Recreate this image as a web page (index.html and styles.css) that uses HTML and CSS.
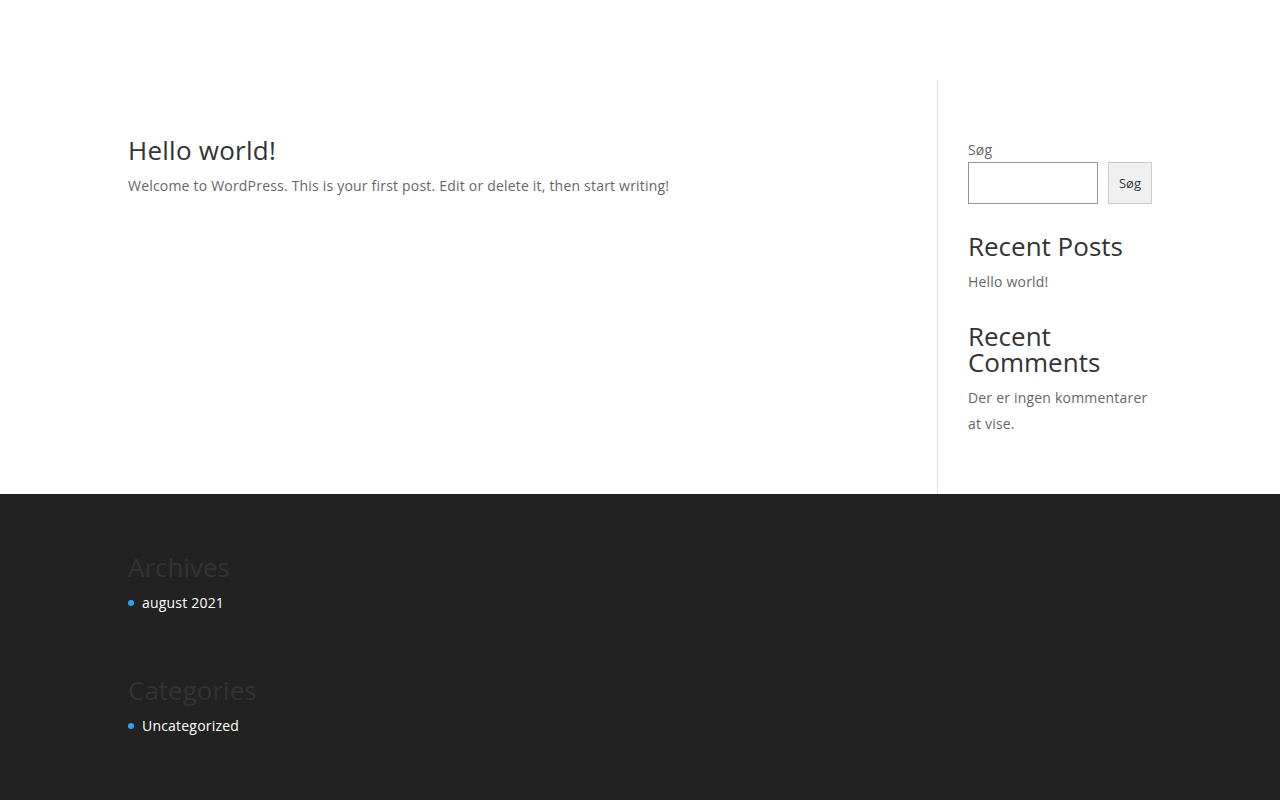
FILE: index.html
```html
<!DOCTYPE html>
<html lang="da">

<head>
    <meta charset="UTF-8">
    <meta name="viewport" content="width=device-width, initial-scale=1">
    <title>Hello world!</title>
    <link rel="stylesheet" href="styles.css">
</head>

<body>
    <!-- Header uden logo og menu -->
    <header class="main-header"></header>

    <div class="main-content">
        <div class="container">
            <div class="left-area">
                <article class="post">
                    <h2 class="entry-title">Hello world!</h2>
                    <p>Welcome to WordPress. This is your first post. Edit or delete it, then start writing!</p>
                </article>
            </div>

            <aside class="sidebar">
                <div class="widget">
                    <form class="search-form" onsubmit="return false">
                        <label for="search">Søg</label>
                        <div class="search-row">
                            <input type="search" id="search" class="search-input">
                            <button type="submit" class="search-button">Søg</button>
                        </div>
                    </form>
                </div>

                <div class="widget">
                    <h2 class="widget-title">Recent Posts</h2>
                    <ul class="widget-list">
                        <li><a href="#">Hello world!</a></li>
                    </ul>
                </div>

                <div class="widget">
                    <h2 class="widget-title">Recent Comments</h2>
                    <p class="no-comments">Der er ingen kommentarer at vise.</p>
                </div>
            </aside>
        </div>
    </div>

    <footer class="main-footer">
        <div class="footer-widgets">
            <div class="footer-widget">
                <h2 class="footer-title">Archives</h2>
                <ul class="footer-list">
                    <li><a href="#">august 2021</a></li>
                </ul>
            </div>

            <div class="footer-widget">
                <h2 class="footer-title">Categories</h2>
                <ul class="footer-list">
                    <li><a href="#">Uncategorized</a></li>
                </ul>
            </div>
        </div>
    </footer>
</body>

</html>
```

FILE: styles.css
```css
/* Reset */
* {
    margin: 0;
    padding: 0;
    box-sizing: border-box;
}

body {
    font-family: 'Open Sans', Arial, sans-serif;
    font-size: 14px;
    line-height: 1.7em;
    letter-spacing: 0.2px;
    color: #666;
    background-color: #fff;
}

a {
    color: inherit;
    text-decoration: none;
}

ul {
    list-style: none;
}

h2 {
    font-size: 26px;
    font-weight: 400;
    line-height: 1em;
    letter-spacing: 0;
    color: #333;
    margin-top: -1px;
    padding-bottom: 11px;
}

/* Header */
.main-header {
    height: 80px;
}

/* Main content */
.container {
    width: 80%;
    max-width: 1080px;
    margin: 0 auto;
    display: flex;
}

.left-area {
    width: 79%;
    padding-top: 58px;
}

.entry-title {
    letter-spacing: 0.25px;
}

.sidebar {
    flex: 1;
    padding: 58px 0 57px 30px;
    border-left: 1px solid #e2e2e2;
}

.widget {
    margin-bottom: 30px;
}

.widget:last-child {
    margin-bottom: 0;
}

/* Søgefelt */
.search-form label {
    display: block;
}

.search-row {
    display: flex;
}

.search-input {
    width: 130px;
    height: 42px;
    border: 1px solid #949494;
    font-family: inherit;
    font-size: 14px;
    padding: 0 8px;
}

.search-button {
    margin-left: 10px;
    width: 44px;
    height: 42px;
    border: 1px solid #ccc;
    background-color: #f0f0f0;
    color: #32373c;
    font-family: inherit;
    font-size: 13px;
}

.no-comments {
    margin-top: -1px;
    line-height: 26px;
}

/* Footer */
.main-footer {
    background-color: #222;
}

.footer-widgets {
    width: 80%;
    max-width: 1080px;
    margin: 0 auto;
    padding: 61px 0 60px;
}

.footer-widget {
    margin-bottom: 64px;
}

.footer-title {
    color: #333;
}

.footer-list li {
    position: relative;
    padding-left: 14px;
    color: #fff;
}

.footer-list li::before {
    content: '';
    position: absolute;
    top: 9px;
    left: 0;
    width: 6px;
    height: 6px;
    border-radius: 3px;
    background-color: #2ea3f2;
}
```
